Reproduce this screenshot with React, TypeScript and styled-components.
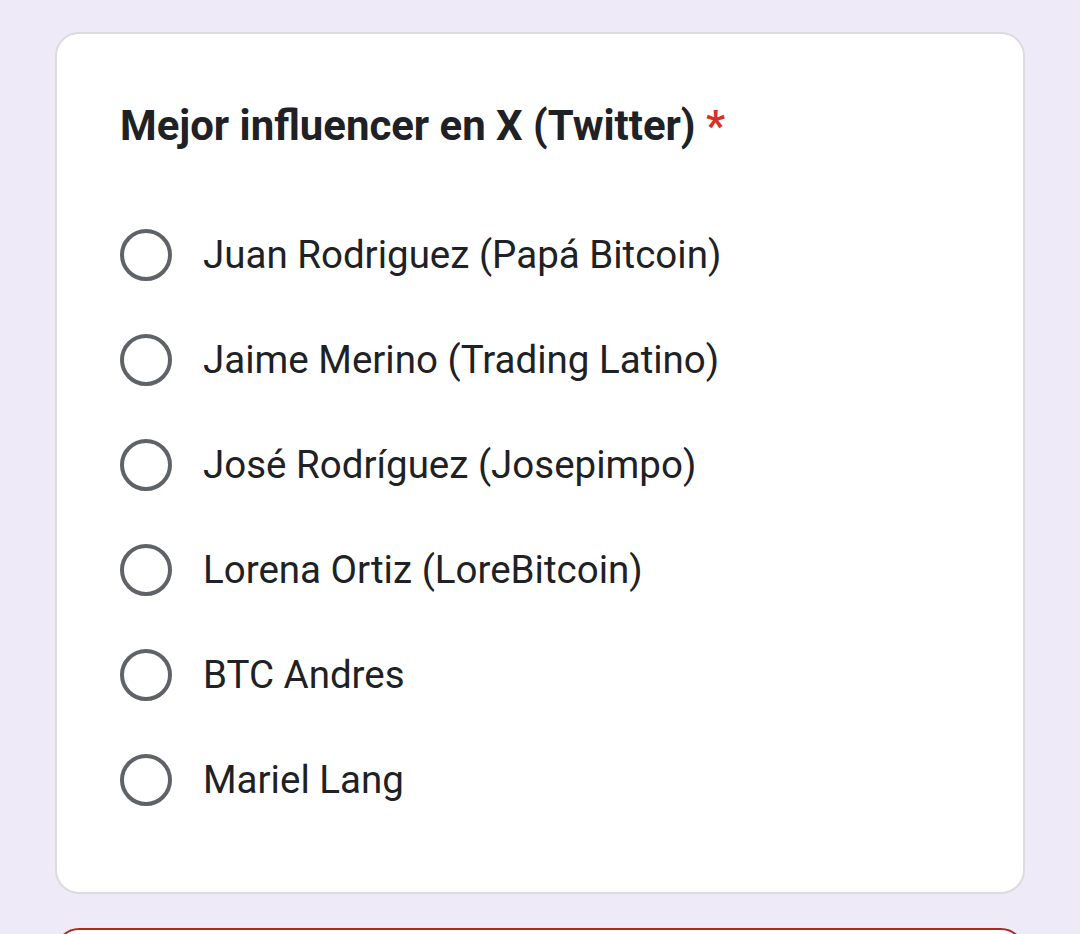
import styled, { createGlobalStyle } from 'styled-components';

const options = [
  'Juan Rodriguez (Papá Bitcoin)',
  'Jaime Merino (Trading Latino)',
  'José Rodríguez (Josepimpo)',
  'Lorena Ortiz (LoreBitcoin)',
  'BTC Andres',
  'Mariel Lang',
];

function App() {
  return (
    <>
      <GlobalStyle />
      <Page>
        <Card>
          <Title>
            Mejor influencer en X (Twitter) <Required>*</Required>
          </Title>
          <OptionList>
            {options.map((label) => (
              <Option key={label}>
                <Radio />
                <Label>{label}</Label>
              </Option>
            ))}
          </OptionList>
        </Card>
        <ErrorCard />
      </Page>
    </>
  );
}

const GlobalStyle = createGlobalStyle`
  html, body {
    margin: 0;
    padding: 0;
    background: #eeeaf7;
    font-family: Roboto, 'Noto Sans', Arial, sans-serif;
    overflow: hidden;
  }
`;

const Page = styled.div`
  height: 934px;
  padding: 32px 55px 0;
  box-sizing: border-box;
  display: flex;
  flex-direction: column;
  gap: 34px;
  overflow: hidden;
`;

const Card = styled.div`
  flex-shrink: 0;
  background: #fff;
  border: 2px solid #dcdbe0;
  border-radius: 24px;
  padding: 67px 63px 60px;
  box-sizing: border-box;
  height: 862px;
`;

const Title = styled.div`
  font-size: 41.9px;
  font-weight: 700;
  line-height: 50px;
  color: #202124;
`;

const Required = styled.span`
  color: #d93025;
`;

const OptionList = styled.div`
  margin-top: 51px;
  display: flex;
  flex-direction: column;
`;

const Option = styled.div`
  height: 105px;
  display: flex;
  align-items: center;
  gap: 31px;
  cursor: pointer;
`;

const Radio = styled.div`
  width: 52px;
  height: 52px;
  border: 4px solid #5f6368;
  border-radius: 50%;
  box-sizing: border-box;
  flex-shrink: 0;
`;

const Label = styled.span`
  font-size: 38.5px;
  color: #202124;
`;

const ErrorCard = styled.div`
  flex-shrink: 0;
  height: 100px;
  background: #fff;
  border: 2px solid #b3261e;
  border-radius: 24px;
`;

export default App;
